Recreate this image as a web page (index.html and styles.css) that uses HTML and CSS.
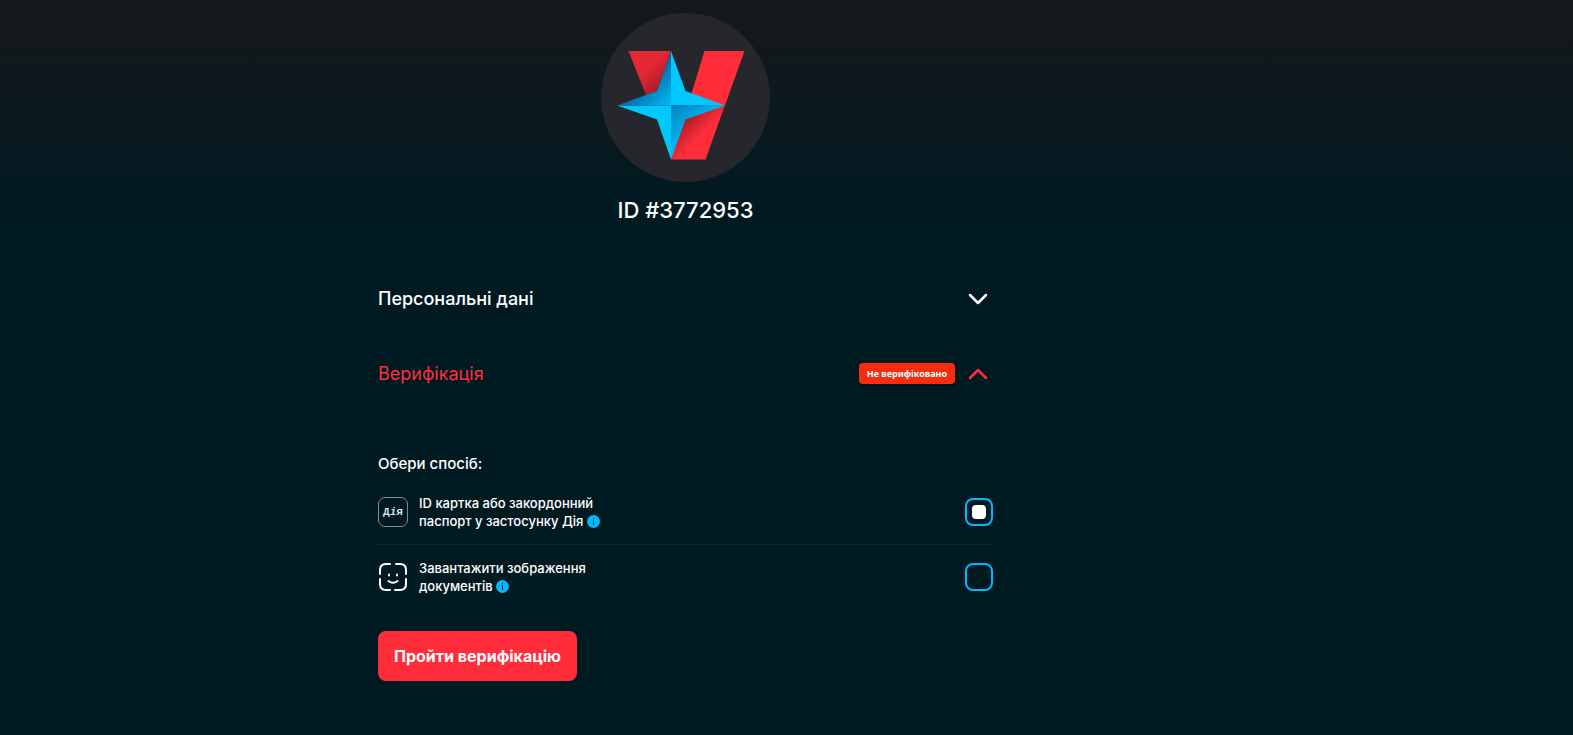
FILE: index.html
```html
<!DOCTYPE html>
<html lang="uk">
<head>
<meta charset="utf-8">
<meta name="viewport" content="width=device-width, initial-scale=1">
<title>Верифікація</title>
<link rel="stylesheet" href="styles.css">
</head>
<body>
<main class="page">
  <div class="profile">
    <header class="profile-head">
      <div class="avatar">
        <svg class="avatar-logo" viewBox="0 0 169 169" aria-hidden="true">
          <defs>
            <linearGradient id="red-left" gradientUnits="userSpaceOnUse" x1="44" y1="58" x2="60" y2="74"><stop offset="0" stop-color="#e62836"/><stop offset="1" stop-color="#a81c28"/></linearGradient>
            <linearGradient id="red-right" gradientUnits="userSpaceOnUse" x1="82" y1="108" x2="98" y2="124"><stop offset="0" stop-color="#a81c28"/><stop offset="1" stop-color="#ff2d3a"/></linearGradient>
            <linearGradient id="blue-left" gradientUnits="userSpaceOnUse" x1="42" y1="66" x2="68" y2="94"><stop offset="0" stop-color="#0562a0"/><stop offset="1" stop-color="#00bdf6"/></linearGradient>
            <linearGradient id="blue-right" gradientUnits="userSpaceOnUse" x1="70" y1="92" x2="94" y2="120"><stop offset="0" stop-color="#057fbd"/><stop offset="1" stop-color="#00bdf8"/></linearGradient>
          </defs>
          <path fill="url(#red-left)" d="M27.500 38H70L56 78 45 82z"/>
          <path fill="#ff2d3a" d="M103.500 38H143.500L124 92.500H84L90 82z"/>
          <path fill="url(#red-right)" d="M84 92H124L104.500 146.500H70z"/>
          <path fill="#00c8ff" d="M70 38L84.500 78 124 92.500H70z"/>
          <path fill="#00c8ff" d="M16 92.500H70V146.500L56 106.500z"/>
          <path fill="url(#blue-left)" d="M70 38V92.500H16L56 78z"/>
          <path fill="url(#blue-right)" d="M70 92.500H124L84.500 106.500 70 146.500z"/>
        </svg>
      </div>
      <h1 class="profile-id">ID #3772953</h1>
    </header>

    <button class="section" type="button" aria-expanded="false">
      <span class="section-title">Персональні дані</span>
      <svg class="chevron" viewBox="0 0 20 12" aria-hidden="true"><path d="M2 2L10 10 18 2"/></svg>
    </button>
    <button class="section section-open" type="button" aria-expanded="true">
      <span class="section-title">Верифікація</span>
      <span class="badge">Не верифіковано</span>
      <svg class="chevron" viewBox="0 0 20 12" aria-hidden="true"><path d="M2 10L10 2 18 10"/></svg>
    </button>

    <form class="methods">
      <h2 class="methods-title">Обери спосіб:</h2>
      <label class="method">
        <span class="diia" aria-hidden="true">Д<i>і</i>я</span>
        <span class="method-text">ID картка або закордонний<br>паспорт у застосунку Дія
          <svg class="info" viewBox="0 0 13 13" aria-hidden="true"><circle cx="6.500" cy="6.500" r="6.500"/><path d="M6.500 3V4.300M6.500 5.300V10"/></svg></span>
        <input class="choice" type="radio" name="method" checked>
      </label>
      <label class="method">
        <svg class="face" viewBox="0 0 30 30" aria-hidden="true">
          <path d="M2 12V8Q2 2 8 2H12M18 2H22Q28 2 28 8V12M28 17V22Q28 28 22 28H17M12 28H8Q2 28 2 22V17"/>
          <path d="M11 12.500V13.500M19 12.500V13.500M10.500 19Q15 22.500 19.500 19"/>
        </svg>
        <span class="method-text">Завантажити зображення<br>документів
          <svg class="info" viewBox="0 0 13 13" aria-hidden="true"><circle cx="6.500" cy="6.500" r="6.500"/><path d="M6.500 3V4.300M6.500 5.300V10"/></svg></span>
        <input class="choice" type="radio" name="method">
      </label>
      <button class="submit" type="submit">Пройти верифікацію</button>
    </form>
  </div>
</main>
</body>
</html>
```

FILE: styles.css
```css
* { box-sizing: border-box; }

body {
  margin: 0;
  min-height: 100vh;
  background: #001a22 linear-gradient(#16181b, #001a22 220px) no-repeat;
  color: #fff;
  font-family: Inter, "Noto Sans", sans-serif;
}

.page { padding: 13px 202px 40px 0; }

.profile {
  max-width: 615px;
  margin: 0 auto;
}

.profile-head {
  display: flex;
  flex-direction: column;
  align-items: center;
  margin-bottom: 35px;
}

.avatar {
  width: 169px;
  height: 169px;
  border-radius: 50%;
  background: #25272d;
}

.avatar-logo { display: block; }

.profile-id {
  margin: 12px 0 0;
  font-size: 22px;
  font-weight: 500;
  line-height: 32px;
}

.section {
  display: flex;
  align-items: center;
  gap: 13px;
  width: 100%;
  height: 75px;
  padding: 0 5px 0 0;
  border: 0;
  background: none;
  color: #fff;
  font: 500 18px/24px Inter, "Noto Sans", sans-serif;
  text-align: left;
}

.section-title { flex: 1; }

.section-open { color: #ff2d3a; font-weight: 400; }

.badge {
  padding: 0 8px;
  border-radius: 4px;
  background: #f82c10;
  box-shadow: 1px 1px 2px #000;
  color: #fff;
  font: 700 9px/21px "Noto Sans", sans-serif;
}

.chevron {
  width: 20px;
  height: 12px;
  fill: none;
  stroke: currentColor;
  stroke-width: 2.5;
  stroke-linecap: round;
  stroke-linejoin: round;
}

.methods { padding-top: 37px; }

.methods-title {
  margin: 0;
  font-size: 15px;
  font-weight: 500;
  line-height: 32px;
}

.method {
  display: flex;
  align-items: center;
  gap: 11px;
  height: 64px;
}

.method + .method { border-top: 1px solid #002c3b; }

.diia {
  width: 30px;
  height: 30px;
  border: 1px solid #7f8c91;
  border-radius: 7px;
  color: #dfe4e6;
  font: 700 11px/28px "Liberation Mono", monospace;
  text-align: center;
}

.face {
  width: 30px;
  height: 30px;
  fill: none;
  stroke: #fff;
  stroke-width: 2;
  stroke-linecap: round;
}

.method-text {
  flex: 1;
  font-size: 13px;
  font-weight: 500;
  line-height: 18px;
}

.info {
  width: 13px;
  height: 13px;
  vertical-align: -2px;
  fill: #00b8ff;
}

.info path { stroke: #001a22; stroke-width: 1; }

.choice {
  appearance: none;
  display: grid;
  place-items: center;
  width: 28px;
  height: 28px;
  margin: 0;
  border: 2px solid #00b8ff;
  border-radius: 8px;
}

.choice:checked::before {
  content: "";
  width: 14px;
  height: 14px;
  border-radius: 4px;
  background: #fff;
}

.submit {
  height: 50px;
  margin-top: 23px;
  padding: 0 16px;
  border: 0;
  border-radius: 8px;
  background: #ff2d3a;
  color: #fff;
  font: 700 16px/24px Inter, "Noto Sans", sans-serif;
}
```
